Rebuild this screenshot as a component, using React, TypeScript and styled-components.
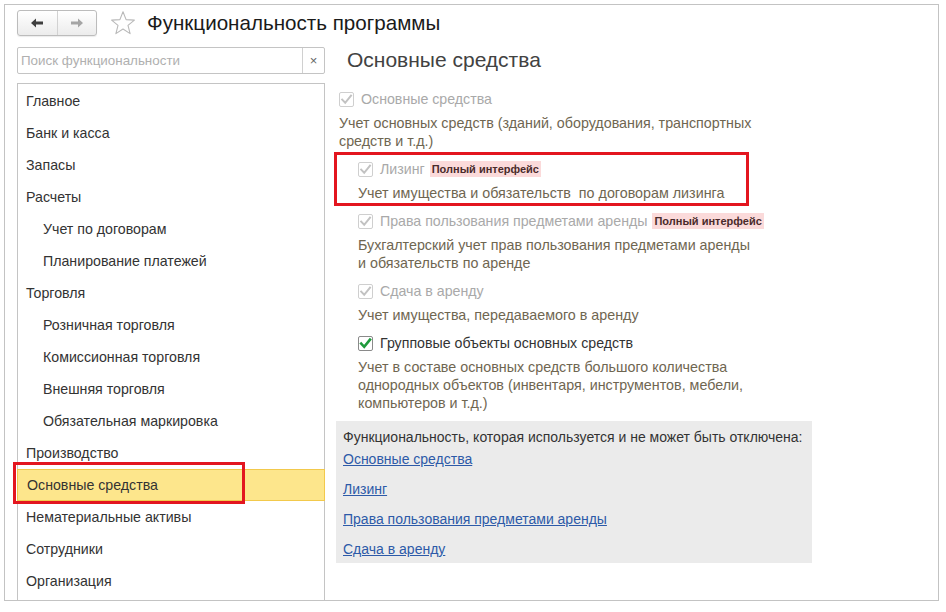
import * as React from "react";
import styled, { createGlobalStyle } from "styled-components";

const GlobalStyle = createGlobalStyle`
  html, body {
    margin: 0;
    padding: 0;
    background: #ffffff;
  }
  body {
    font-family: Arial, "Liberation Sans", sans-serif;
    color: #333333;
  }
`;

type NavItem = { title: string; level: number; selected?: boolean };

const sections: NavItem[] = [
  { title: "Главное", level: 0 },
  { title: "Банк и касса", level: 0 },
  { title: "Запасы", level: 0 },
  { title: "Расчеты", level: 0 },
  { title: "Учет по договорам", level: 1 },
  { title: "Планирование платежей", level: 1 },
  { title: "Торговля", level: 0 },
  { title: "Розничная торговля", level: 1 },
  { title: "Комиссионная торговля", level: 1 },
  { title: "Внешняя торговля", level: 1 },
  { title: "Обязательная маркировка", level: 1 },
  { title: "Производство", level: 0 },
  { title: "Основные средства", level: 0, selected: true },
  { title: "Нематериальные активы", level: 0 },
  { title: "Сотрудники", level: 0 },
  { title: "Организация", level: 0 },
];

const lockedLinks = [
  "Основные средства",
  "Лизинг",
  "Права пользования предметами аренды",
  "Сдача в аренду",
];

export default function App() {
  return (
    <>
      <GlobalStyle />
      <Page>
        <Window>
          <Header>
            <NavGroup>
              <NavButton $active>
                <Arrow dir="left" />
              </NavButton>
              <NavButton>
                <Arrow dir="right" />
              </NavButton>
            </NavGroup>
            <StarIcon />
            <Title>Функциональность программы</Title>
          </Header>

          <Body>
            <Sidebar>
              <Search>
                <SearchInput placeholder="Поиск функциональности" />
                <ClearButton>×</ClearButton>
              </Search>
              <SectionList>
                {sections.map((s) => (
                  <SectionItem key={s.title} $level={s.level} $selected={s.selected}>
                    {s.title}
                    {s.selected && <Marker $left={-5} $right={79} />}
                  </SectionItem>
                ))}
              </SectionList>
            </Sidebar>

            <Content>
              <Heading>Основные средства</Heading>

              <Option>
                <CheckRow>
                  <CheckBox disabled checked />
                  <Label $disabled>Основные средства</Label>
                </CheckRow>
                <Description>
                  Учет основных средств (зданий, оборудования, транспортных
                  <br />
                  средств и т.д.)
                </Description>
              </Option>

              <Option $nested $marked>
                <CheckRow>
                  <CheckBox disabled checked />
                  <Label $disabled>Лизинг</Label>
                  <Badge>Полный интерфейс</Badge>
                </CheckRow>
                <Description>Учет имущества и обязательств&nbsp; по договорам лизинга</Description>
              </Option>

              <Option $nested>
                <CheckRow>
                  <CheckBox disabled checked />
                  <Label $disabled>Права пользования предметами аренды</Label>
                  <Badge>Полный интерфейс</Badge>
                </CheckRow>
                <Description>
                  Бухгалтерский учет прав пользования предметами аренды
                  <br />и обязательств по аренде
                </Description>
              </Option>

              <Option $nested>
                <CheckRow>
                  <CheckBox disabled checked />
                  <Label $disabled>Сдача в аренду</Label>
                </CheckRow>
                <Description>Учет имущества, передаваемого в аренду</Description>
              </Option>

              <Option $nested>
                <CheckRow>
                  <CheckBox checked />
                  <Label>Групповые объекты основных средств</Label>
                </CheckRow>
                <Description>
                  Учет в составе основных средств большого количества
                  <br />
                  однородных объектов (инвентаря, инструментов, мебели,
                  <br />
                  компьютеров и т.д.)
                </Description>
              </Option>

              <LockedPanel>
                <LockedTitle>Функциональность, которая используется и не может быть отключена:</LockedTitle>
                {lockedLinks.map((l) => (
                  <LockedLink key={l} href="#">
                    {l}
                  </LockedLink>
                ))}
              </LockedPanel>
            </Content>
          </Body>
        </Window>
      </Page>
    </>
  );
}

const Arrow: React.FC<{ dir: "left" | "right" }> = ({ dir }) => (
  <svg width="14" height="10" viewBox="0 0 14 10">
    <g transform={dir === "right" ? "translate(14 0) scale(-1 1)" : undefined}>
      <path d="M1 5 L6 0.5 L6 3.6 L13 3.6 L13 6.4 L6 6.4 L6 9.5 Z" fill="currentColor" />
    </g>
  </svg>
);

const StarIcon = () => (
  <StarSvg width="26" height="26" viewBox="0 0 26 26">
    <path
      d="M13 1.8 L16.1 9.6 L24.4 10.1 L18 15.4 L20.1 23.6 L13 19 L5.9 23.6 L8 15.4 L1.6 10.1 L9.9 9.6 Z"
      fill="none"
      stroke="#b9b9b9"
      strokeWidth="1.1"
      strokeLinejoin="round"
    />
  </StarSvg>
);

const CheckBox: React.FC<{ checked?: boolean; disabled?: boolean }> = ({ checked, disabled }) => (
  <Box $disabled={disabled}>
    {checked && (
      <svg width="13" height="13" viewBox="0 0 13 13">
        <path
          d="M2.2 6.6 L5.2 9.8 L11 2.6"
          fill="none"
          stroke={disabled ? "#c2c2c2" : "#1f9a3c"}
          strokeWidth={disabled ? 2 : 2.6}
          strokeLinecap="square"
        />
      </svg>
    )}
  </Box>
);

const Page = styled.div`
  width: 946px;
  height: 612px;
  padding: 4px 0 0 4px;
  box-sizing: border-box;
  overflow: hidden;
`;

const Window = styled.div`
  width: 935px;
  height: 597px;
  box-sizing: border-box;
  border: 1px solid #c3c3c3;
  padding: 5px 0 0 12px;
  overflow: hidden;
  background: #ffffff;
`;

const Header = styled.div`
  display: flex;
  align-items: center;
  height: 26px;
`;

const NavGroup = styled.div`
  display: flex;
  width: 80px;
  height: 26px;
  box-sizing: border-box;
  border: 1px solid #bcbcbc;
  border-radius: 3px;
  background: linear-gradient(#ffffff, #ececec);
  box-shadow: 0 1px 1px rgba(0, 0, 0, 0.08);
`;

const NavButton = styled.div<{ $active?: boolean }>`
  flex: 1;
  display: flex;
  align-items: center;
  justify-content: center;
  color: ${(p) => (p.$active ? "#3f3f3f" : "#a5a5a5")};
  & + & {
    border-left: 1px solid #d2d2d2;
  }
`;

const StarSvg = styled.svg`
  margin-left: 13px;
`;

const Title = styled.h1`
  margin: 0 0 0 11px;
  font-size: 20.6px;
  font-weight: normal;
  color: #1a1a1a;
  line-height: 26px;
`;

const Body = styled.div`
  display: flex;
  gap: 9px;
  margin-top: 11px;
`;

const Sidebar = styled.div`
  width: 308px;
  flex-shrink: 0;
  display: flex;
  flex-direction: column;
`;

const Search = styled.div`
  display: flex;
  height: 27px;
  box-sizing: border-box;
  border: 1px solid #c4c4c4;
  border-radius: 2px;
`;

const SearchInput = styled.input`
  flex: 1;
  min-width: 0;
  border: none;
  outline: none;
  padding: 0 3px;
  font-family: Arial, "Liberation Sans", sans-serif;
  font-size: 13.4px;
  color: #333;
  background: transparent;
  &::placeholder {
    color: #b0b0b0;
  }
`;

const ClearButton = styled.div`
  width: 21px;
  display: flex;
  align-items: center;
  justify-content: center;
  border-left: 1px solid #d0d0d0;
  font-size: 13px;
  color: #666;
`;

const SectionList = styled.div`
  margin-top: 9px;
  height: 520px;
  box-sizing: border-box;
  border: 1px solid #c4c4c4;
  padding-top: 1px;
`;

const SectionItem = styled.div<{ $level: number; $selected?: boolean }>`
  position: relative;
  height: 32px;
  box-sizing: border-box;
  display: flex;
  align-items: center;
  padding-left: ${(p) => (p.$level ? 26 : 9)}px;
  font-size: 14.2px;
  color: #333;
  background: ${(p) => (p.$selected ? "#fde68c" : "transparent")};
  border: 1px solid ${(p) => (p.$selected ? "#f2c94c" : "transparent")};
  border-left: none;
  border-right: none;
  margin: 0 -1px;
  ${(p) => p.$selected && "border-left: 1px solid #f2c94c; border-right: 1px solid #f2c94c;"}
`;

const Marker = styled.span<{ $left: number; $right: number }>`
  position: absolute;
  left: ${(p) => p.$left}px;
  right: ${(p) => p.$right}px;
  top: -8px;
  bottom: -4px;
  border: 3px solid #e3161f;
  pointer-events: none;
`;

const Content = styled.div`
  flex: 1;
  display: flex;
  flex-direction: column;
  align-items: flex-start;
`;

const Heading = styled.h2`
  margin: 1px 0 0 13px;
  font-size: 21px;
  line-height: 24px;
  font-weight: normal;
  color: #424242;
`;

const Option = styled.div<{ $nested?: boolean; $marked?: boolean }>`
  position: relative;
  margin-left: ${(p) => (p.$nested ? 24 : 5)}px;
  margin-top: ${(p) => (p.$nested ? 9 : 17)}px;
  ${(p) =>
    p.$marked &&
    `
    &::after {
      content: "";
      position: absolute;
      left: -24px;
      top: -7px;
      width: 415px;
      height: 54px;
      box-sizing: border-box;
      border: 3px solid #e3161f;
      pointer-events: none;
    }
  `}
`;

const CheckRow = styled.div`
  display: flex;
  align-items: center;
  height: 20px;
`;

const Box = styled.span<{ $disabled?: boolean }>`
  width: 15px;
  height: 15px;
  box-sizing: border-box;
  border: 1px solid ${(p) => (p.$disabled ? "#cfcfcf" : "#8a8a8a")};
  border-radius: 2px;
  background: #fff;
  display: flex;
  align-items: center;
  justify-content: center;
  margin-right: 7px;
`;

const Label = styled.span<{ $disabled?: boolean }>`
  font-size: 14.2px;
  color: ${(p) => (p.$disabled ? "#a9a9a9" : "#333")};
`;

const Badge = styled.span`
  margin-left: 5px;
  padding: 1px 2px;
  background: #fbdada;
  color: #4a2b2b;
  font-size: 11px;
  font-weight: bold;
  line-height: 14px;
`;

const Description = styled.div`
  margin-top: 5px;
  font-size: 14.3px;
  line-height: 18px;
  color: #6f6651;
`;

const LockedPanel = styled.div`
  margin: 9px 0 0 2px;
  width: 476px;
  box-sizing: border-box;
  padding: 7px 7px 5px;
  background: #ebebeb;
  display: flex;
  flex-direction: column;
  align-items: flex-start;
`;

const LockedTitle = styled.div`
  font-size: 14px;
  line-height: 18px;
  color: #333;
  margin-bottom: 4px;
`;

const LockedLink = styled.a`
  font-size: 14px;
  line-height: 18px;
  color: #2d5aa8;
  text-decoration: underline;
  & + & {
    margin-top: 12px;
  }
`;
